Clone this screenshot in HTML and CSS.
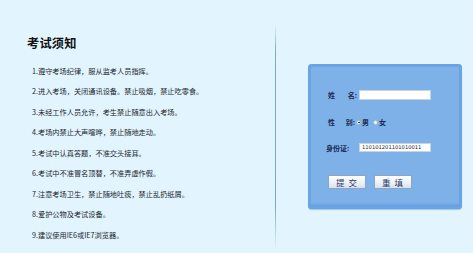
FILE: index.html
```html
<!DOCTYPE html>
<html lang="zh">
<head>
<meta charset="utf-8">
<link rel="stylesheet" href="styles.css">
</head>
<body>
<div class="page">
  <div class="notice">
    <h1 class="title">考试须知</h1>
    <ol class="rules">
      <li>1.遵守考场纪律，服从监考人员指挥。</li>
      <li>2.进入考场，关闭通讯设备。禁止吸烟，禁止吃零食。</li>
      <li>3.未经工作人员允许，考生禁止随意出入考场。</li>
      <li>4.考场内禁止大声喧哗，禁止随地走动。</li>
      <li>5.考试中认真答题，不准交头接耳。</li>
      <li>6.考试中不准冒名顶替，不准弄虚作假。</li>
      <li>7.注意考场卫生，禁止随地吐痰，禁止乱扔纸屑。</li>
      <li>8.爱护公物及考试设备。</li>
      <li>9.建议使用IE6或IE7浏览器。</li>
    </ol>
  </div>
  <div class="divider"></div>
  <div class="side">
    <form class="panel">
      <div class="row r1">
        <span class="label split"><span>姓</span><span>名:</span></span>
        <span class="input"></span>
      </div>
      <div class="row r2">
        <span class="label split short"><span>性</span><span>别:</span></span>
        <span class="radios">
          <span class="radio on"></span><span class="opt">男</span>
          <span class="radio"></span><span class="opt">女</span>
        </span>
      </div>
      <div class="row r3">
        <span class="label">身份证:</span>
        <span class="input">110101201101010011</span>
      </div>
      <div class="buttons">
        <span class="btn">提 交</span>
        <span class="btn">重 填</span>
      </div>
    </form>
  </div>
</div>
</body>
</html>
```
FILE: styles.css
```css
html, body {
  margin: 0;
  padding: 0;
}
body {
  width: 473px;
  height: 253px;
  overflow: hidden;
  background: #e2f4fd;
  font-family: "Noto Sans CJK SC", "Noto Sans", sans-serif;
}
.page {
  display: flex;
  height: 253px;
}
.notice {
  width: 275px;
  padding: 35px 0 0 27px;
  box-sizing: border-box;
}
.title {
  margin: 0;
  font-size: 12.2px;
  line-height: 16px;
  font-weight: 700;
  color: #111;
  letter-spacing: 0.2px;
}
.rules {
  list-style: none;
  margin: 10px 0 0 0;
  padding: 0 0 0 5px;
}
.rules li {
  font-size: 7.2px;
  line-height: 20.45px;
  color: #1b1f2e;
  white-space: nowrap;
}
.divider {
  width: 1px;
  margin-top: 24px;
  height: 226px;
  background: linear-gradient(to bottom, rgba(120,170,185,0) 0%, #78aebd 12%, #74aaba 80%, rgba(120,170,185,0) 100%);
}
.side {
  padding: 64px 0 0 32px;
}
.panel {
  width: 154px;
  height: 145px;
  box-sizing: border-box;
  border-radius: 4px;
  background: #7db1e8;
  box-shadow: inset 0 0 0 3px #6aa4e2, inset 0 -4px 3px #5d98d8, 0 1px 1px #9cc6ec;
  padding: 26px 0 0 18px;
  display: flex;
  flex-direction: column;
}
.row {
  display: flex;
  align-items: center;
  height: 10px;
}
.r2 { margin-top: 17px; }
.r3 { margin-top: 16px; height: 9px; }
.label {
  width: 33px;
  font-size: 7px;
  font-weight: 700;
  color: #1c2a52;
  white-space: nowrap;
}
.split {
  display: flex;
  justify-content: space-between;
  padding: 0 2px 0 2px;
  box-sizing: border-box;
}
.split.short {
  width: 29px;
  padding-right: 0;
}
.input {
  width: 72px;
  height: 100%;
  box-sizing: border-box;
  background: #fff;
  border: 1px solid #c5d4e4;
  font-family: "DejaVu Sans", sans-serif;
  font-size: 5.2px;
  line-height: 7px;
  padding-left: 2px;
  color: #222;
  white-space: nowrap;
}
.radios {
  display: flex;
  align-items: center;
  font-size: 7px;
  font-weight: 700;
  color: #1c2a52;
  margin-left: 1px;
}
.radio {
  width: 5px;
  height: 5px;
  border-radius: 50%;
  background: #fff;
  border: 1px solid #9fb3c8;
  box-sizing: border-box;
  position: relative;
}
.radio.on::after {
  content: "";
  position: absolute;
  left: 1.2px;
  top: 1.2px;
  width: 1.6px;
  height: 1.6px;
  border-radius: 50%;
  background: #223;
}
.opt {
  margin: 0 4px 0 1px;
}
.buttons {
  display: flex;
  gap: 8px;
  margin: 23px 0 0 2px;
}
.btn {
  width: 38px;
  height: 14px;
  box-sizing: border-box;
  border: 1px solid #8ea6c4;
  background: linear-gradient(to bottom, #ffffff 0%, #eef3f9 50%, #d7e1ee 100%);
  font-family: "Noto Sans CJK SC", serif;
  font-size: 8.5px;
  line-height: 12px;
  text-align: center;
  color: #2e3a66;
  letter-spacing: 1px;
}
```
